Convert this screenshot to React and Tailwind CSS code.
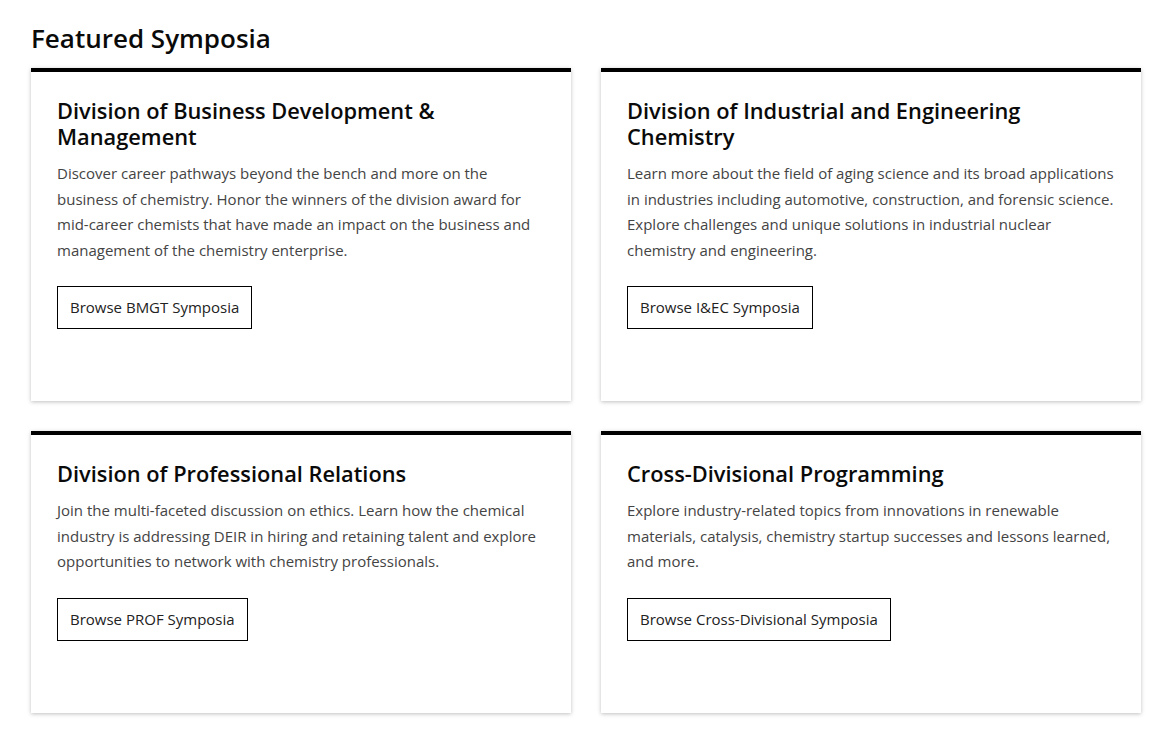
const cards = [
  {
    title: 'Division of Business Development & Management',
    body: 'Discover career pathways beyond the bench and more on the business of chemistry. Honor the winners of the division award for mid-career chemists that have made an impact on the business and management of the chemistry enterprise.',
    cta: 'Browse BMGT Symposia',
  },
  {
    title: 'Division of Industrial and Engineering Chemistry',
    body: 'Learn more about the field of aging science and its broad applications in industries including automotive, construction, and forensic science. Explore challenges and unique solutions in industrial nuclear chemistry and engineering.',
    cta: 'Browse I&EC Symposia',
  },
  {
    title: 'Division of Professional Relations',
    body: 'Join the multi-faceted discussion on ethics. Learn how the chemical industry is addressing DEIR in hiring and retaining talent and explore opportunities to network with chemistry professionals.',
    cta: 'Browse PROF Symposia',
  },
  {
    title: 'Cross-Divisional Programming',
    body: 'Explore industry-related topics from innovations in renewable materials, catalysis, chemistry startup successes and lessons learned, and more.',
    cta: 'Browse Cross-Divisional Symposia',
  },
];

function Card({ title, body, cta }) {
  return (
    <div className="bg-white border-t-4 border-black shadow-[0_1px_4px_rgba(0,0,0,0.25)] px-[26px] pt-[26px] pb-[72px]">
      <h3 className="text-[21.8px] leading-[26px] font-semibold text-[#0a0a0a] pr-[80px]">{title}</h3>
      <p className="mt-[11px] text-[15px] leading-[25.5px] text-[#444]">{body}</p>
      <a href="#" className="mt-[23px] inline-flex items-center h-[43px] px-3 border border-black text-[15px] text-[#222]">
        {cta}
      </a>
    </div>
  );
}

export default function App() {
  return (
    <div className="min-h-screen bg-white font-['Open_Sans',sans-serif]">
      <div className="w-[1110px] ml-[31px] pt-[22px]">
        <h2 className="text-[26px] leading-[32px] font-semibold text-[#0a0a0a] mb-[14px]">Featured Symposia</h2>
        <div className="grid grid-cols-2 gap-[30px]">
          {cards.map((c) => (
            <Card key={c.cta} {...c} />
          ))}
        </div>
      </div>
    </div>
  );
}
